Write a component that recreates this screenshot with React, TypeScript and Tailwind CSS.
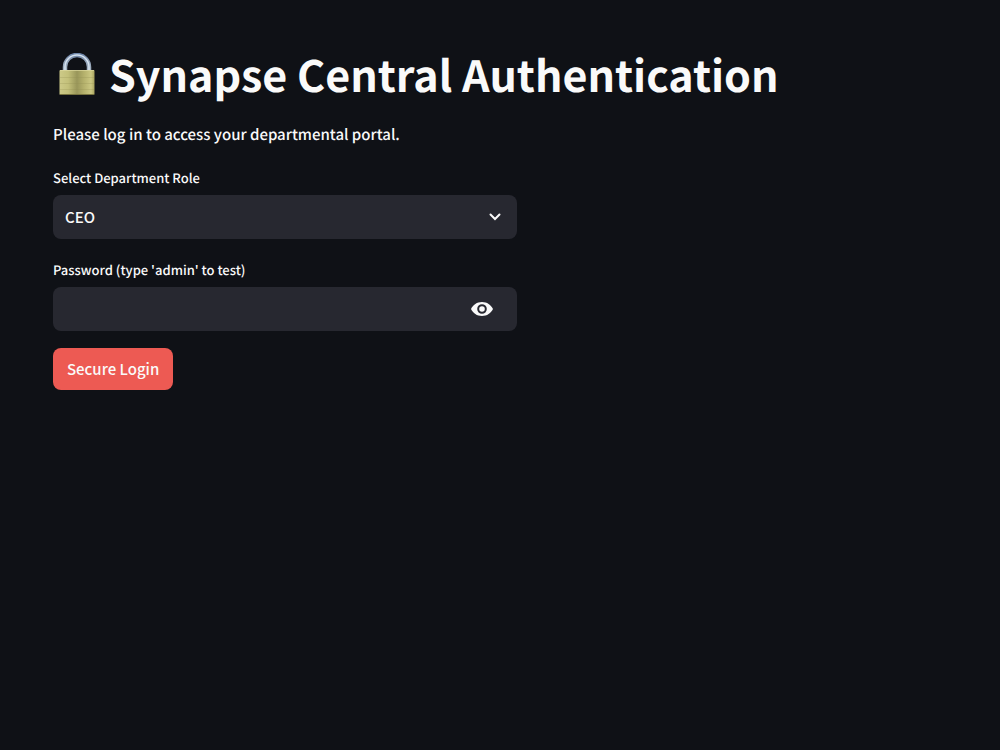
import React, { useState } from "react";

type Role = "CEO" | "HR" | "Finance" | "Engineering";

const ROLES: Role[] = ["CEO", "HR", "Finance", "Engineering"];

const LockIcon: React.FC = () => (
  <svg viewBox="0 0 36 42" className="h-[42px] w-9 shrink-0" aria-hidden="true">
    <defs>
      <linearGradient id="brass" x1="0" x2="1" y1="0" y2="0">
        <stop offset="0" stopColor="#cdca88" />
        <stop offset="0.25" stopColor="#c3c07a" />
        <stop offset="0.5" stopColor="#99965a" />
        <stop offset="0.7" stopColor="#b5b16c" />
        <stop offset="0.9" stopColor="#cbc782" />
        <stop offset="1" stopColor="#a8a35e" />
      </linearGradient>
      <linearGradient id="steel" x1="0" x2="0" y1="0" y2="1">
        <stop offset="0" stopColor="#7088ab" />
        <stop offset="0.3" stopColor="#8c9db4" />
        <stop offset="1" stopColor="#a9b7c4" />
      </linearGradient>
    </defs>
    <path d="M6 19v-5a12 12 0 0 1 24 0v5" fill="none" stroke="url(#steel)" strokeWidth="4.500" />
    <path d="M6 18v-4a12 12 0 0 1 24 0v4" fill="none" stroke="#d5e2ee" strokeWidth="1.500" />
    <rect x="0.500" y="17" width="35" height="25" rx="1" fill="url(#brass)" />
    <path d="M1 17.500h34" stroke="#dedaa0" strokeOpacity="0.7" />
    <path d="M1 24.500h34M1 30.500h34M1 36.500h34" stroke="#8f8b50" strokeOpacity="0.25" />
    <path d="M1 41.500h34" stroke="#77733f" />
  </svg>
);

const ChevronIcon: React.FC = () => (
  <svg viewBox="0 0 12 8" className="pointer-events-none absolute right-4 h-2 w-3" aria-hidden="true">
    <path d="M1.500 1.500 6 6l4.500-4.500" fill="none" stroke="#fafafa" strokeWidth="2" strokeLinecap="round" />
  </svg>
);

const EyeIcon: React.FC = () => (
  <svg viewBox="0 0 22 14" className="h-3.5 w-[22px]" aria-hidden="true">
    <path
      fillRule="evenodd"
      fill="#fafafa"
      d="M11 0C6 0 2 2.800 0 7c2 4.200 6 7 11 7s9-2.800 11-7c-2-4.200-6-7-11-7Zm0 11.800a4.800 4.800 0 1 1 0-9.600 4.800 4.800 0 0 1 0 9.600Zm0-2a2.800 2.800 0 1 0 0-5.600 2.800 2.800 0 0 0 0 5.600Z"
    />
  </svg>
);

const App: React.FC = () => {
  const [role, setRole] = useState<Role>("CEO");
  const [password, setPassword] = useState<string>("");
  const [visible, setVisible] = useState<boolean>(false);

  return (
    <main className="min-h-screen bg-[#0f1116] px-[53px] pt-11 font-['Noto_Sans_CJK_SC',sans-serif] font-medium text-[#fafafa] [text-rendering:geometricPrecision]">
      <h1 className="flex items-center gap-3.5 pl-1.5 text-[43px] leading-[60px] font-bold">
        <LockIcon />
        Synapse Central Authentication
      </h1>
      <p className="mt-[17px] text-[15px] leading-7">Please log in to access your departmental portal.</p>

      <form className="mt-[19px] max-w-[464px]" onSubmit={(e) => e.preventDefault()}>
        {/* Department */}
        <label htmlFor="role" className="block text-[13px] leading-5">
          Select Department Role
        </label>
        <div className="relative mt-[7px] flex items-center">
          <select
            id="role"
            value={role}
            onChange={(e) => setRole(e.target.value as Role)}
            className="h-11 w-full appearance-none rounded-lg bg-[#272830] px-3 text-[15px]"
          >
            {ROLES.map((r) => (
              <option key={r} value={r}>
                {r}
              </option>
            ))}
          </select>
          <ChevronIcon />
        </div>

        {/* Password */}
        <label htmlFor="password" className="mt-[21px] block text-[13px] leading-5">
          Password (type 'admin' to test)
        </label>
        <div className="mt-[7px] flex h-11 items-center rounded-lg bg-[#272830]">
          <input
            id="password"
            type={visible ? "text" : "password"}
            value={password}
            onChange={(e) => setPassword(e.target.value)}
            className="h-full min-w-0 flex-1 px-3 text-[15px] outline-none"
          />
          <button
            type="button"
            aria-label="Show password"
            onClick={() => setVisible(!visible)}
            className="px-6"
          >
            <EyeIcon />
          </button>
        </div>

        <button type="submit" className="mt-[17px] h-[42px] rounded-lg bg-[#ed5a53] px-3.5 text-[15px]">
          Secure Login
        </button>
      </form>
    </main>
  );
};

export default App;
